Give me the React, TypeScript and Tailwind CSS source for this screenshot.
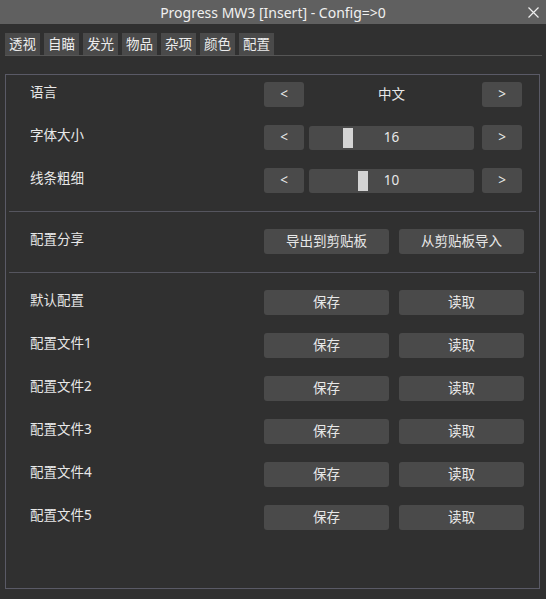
const tabs = ['透视', '自瞄', '发光', '物品', '杂项', '颜色', '配置'];
const profiles = ['默认配置', '配置文件1', '配置文件2', '配置文件3', '配置文件4', '配置文件5'];

const font = { fontFamily: '"Noto Sans", "Noto Sans CJK SC", sans-serif' };

function Btn({ children, className = '' }: { children?: React.ReactNode; className?: string }) {
  return (
    <button
      className={`h-[25px] rounded-[3px] bg-[#4a4a4a] text-[#e8e8e8] text-[13.5px] leading-none flex items-center justify-center ${className}`}
    >
      {children}
    </button>
  );
}

function Row({ label, children }: { label: string; children: React.ReactNode }) {
  return (
    <div className="flex items-center h-[25px]">
      <div className="w-[255px] pl-[21px] -mt-1 text-[13.5px] text-[#e8e8e8]">{label}</div>
      <div className="flex items-center">{children}</div>
    </div>
  );
}

function Slider({ value, pos }: { value: number; pos: number }) {
  return (
    <div className="relative ml-[5px] w-[165px] h-[24px] rounded-[3px] bg-[#4a4a4a] flex items-center justify-center text-[13.5px] text-[#e8e8e8]">
      <div className="absolute top-[2px] w-[10px] h-[20px] bg-[#d4d4d4]" style={{ left: pos }} />
      <span className="relative">{value}</span>
    </div>
  );
}

export default function App() {
  return (
    <div className="w-[546px] h-[599px] bg-[#303030] flex flex-col" style={font}>
      {/* Title bar */}
      <div className="relative h-[24px] bg-[#606060] flex items-center justify-center text-[14px] text-[#f0f0f0]">
        Progress MW3 [Insert] - Config=&gt;0
        <svg className="absolute right-[7px] top-[7px]" width="11" height="11" viewBox="0 0 11 11">
          <path d="M0.5 0.5 L10.5 10.5 M10.5 0.5 L0.5 10.5" stroke="#eeeeee" strokeWidth="1.2" fill="none" />
        </svg>
      </div>

      {/* Tabs */}
      <div className="mt-[9px] ml-[5px] mr-[4px] flex gap-[4px] border-b border-[#555555]">
        {tabs.map((t) => (
          <div
            key={t}
            className="w-[35px] h-[22px] bg-[#4a4a4a] text-[13.5px] text-[#ececec] flex items-center justify-center"
          >
            {t}
          </div>
        ))}
      </div>

      {/* Panel */}
      <div className="mt-[18px] ml-[5px] w-[535px] h-[515px] border border-[#5a5a66] pt-[7px] px-[3px] flex flex-col">
        <div className="flex flex-col gap-[18px]">
          <Row label="语言">
            <Btn className="w-[40px]">&lt;</Btn>
            <div className="ml-[5px] w-[165px] text-center text-[13.5px] text-[#e8e8e8]">中文</div>
            <Btn className="ml-[8px] w-[40px]">&gt;</Btn>
          </Row>
          <Row label="字体大小">
            <Btn className="w-[40px]">&lt;</Btn>
            <Slider value={16} pos={34} />
            <Btn className="ml-[8px] w-[40px]">&gt;</Btn>
          </Row>
          <Row label="线条粗细">
            <Btn className="w-[40px]">&lt;</Btn>
            <Slider value={10} pos={49} />
            <Btn className="ml-[8px] w-[40px]">&gt;</Btn>
          </Row>
        </div>

        <div className="mt-[18px] h-px bg-[#55555e]" />

        <div className="mt-[17px]">
          <Row label="配置分享">
            <Btn className="w-[125px]">导出到剪贴板</Btn>
            <Btn className="ml-[10px] w-[125px]">从剪贴板导入</Btn>
          </Row>
        </div>

        <div className="mt-[18px] h-px bg-[#55555e]" />

        <div className="mt-[17px] flex flex-col gap-[18px]">
          {profiles.map((p) => (
            <Row key={p} label={p}>
              <Btn className="w-[125px]">保存</Btn>
              <Btn className="ml-[10px] w-[125px]">读取</Btn>
            </Row>
          ))}
        </div>
      </div>
    </div>
  );
}
